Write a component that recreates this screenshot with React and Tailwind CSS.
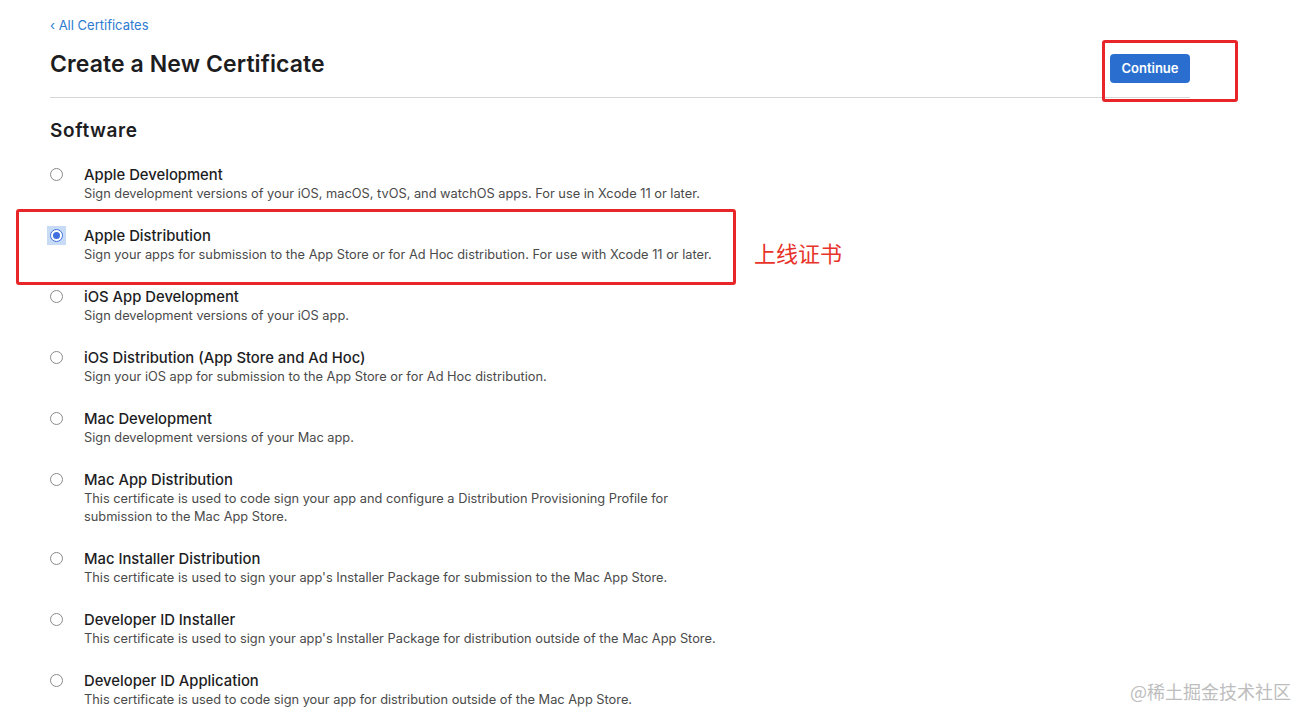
import React from "react";

const rows = [
  { t: "Apple Development", d: ["Sign development versions of your iOS, macOS, tvOS, and watchOS apps. For use in Xcode 11 or later."] },
  { t: "Apple Distribution", d: ["Sign your apps for submission to the App Store or for Ad Hoc distribution. For use with Xcode 11 or later."], sel: true },
  { t: "iOS App Development", d: ["Sign development versions of your iOS app."] },
  { t: "iOS Distribution (App Store and Ad Hoc)", d: ["Sign your iOS app for submission to the App Store or for Ad Hoc distribution."] },
  { t: "Mac Development", d: ["Sign development versions of your Mac app."] },
  { t: "Mac App Distribution", d: ["This certificate is used to code sign your app and configure a Distribution Provisioning Profile for", "submission to the Mac App Store."] },
  { t: "Mac Installer Distribution", d: ["This certificate is used to sign your app's Installer Package for submission to the Mac App Store."] },
  { t: "Developer ID Installer", d: ["This certificate is used to sign your app's Installer Package for distribution outside of the Mac App Store."] },
  { t: "Developer ID Application", d: ["This certificate is used to code sign your app for distribution outside of the Mac App Store."] },
];

function Radio({ sel }) {
  if (sel) {
    return (
      <div className="w-[19px] h-[19px] bg-[#c7dbf6] flex items-center justify-center -ml-[3px] -mt-[3px]">
        <div className="w-[13px] h-[13px] rounded-full border border-[#3f6fe0] bg-white flex items-center justify-center">
          <div className="w-[7px] h-[7px] rounded-full bg-[#3f6fe0]" />
        </div>
      </div>
    );
  }
  return <div className="w-[13px] h-[13px] rounded-full border border-[#8a8a8a] bg-white" />;
}

export default function App() {
  return (
    <div
      className="relative w-[1311px] h-[725px] overflow-hidden bg-white text-[#1d1d1f]"
      style={{ fontFamily: "Inter, 'Noto Sans', 'Noto Sans CJK SC', sans-serif" }}
    >
      <div className="pl-[50px] w-[1190px] pt-[16px]">
        <div className="text-[13px] leading-[18px] text-[#2d7bd0]">‹ All Certificates</div>
        <div className="flex items-start justify-between mt-[16px]">
          <h1 className="text-[23px] leading-[28px] font-semibold tracking-[0.1px] text-[#1d1d1f]">Create a New Certificate</h1>
          <button className="w-[80px] h-[29px] mt-[4px] rounded-[4px] bg-[#2a6fd0] text-white text-[13px] font-semibold">Continue</button>
        </div>
        <div className="mt-[14px] h-px bg-[#d6d6d6]" />
        <h2 className="mt-[21px] text-[19px] leading-[24px] font-semibold tracking-[0.6px]">Software</h2>
        <div className="mt-[22px]">
          {rows.map((r) => (
            <div key={r.t} className="flex mb-[23px]">
              <div className="w-[34px] pt-[3px] flex">
                <Radio sel={r.sel} />
              </div>
              <div>
                <div className="text-[14.8px] leading-[20px] font-medium text-[#1d1d1f]">{r.t}</div>
                {r.d.map((l, i) => (
                  <div key={i} className="text-[12.8px] leading-[18px] text-[#4a4a4a]">{l}</div>
                ))}
              </div>
            </div>
          ))}
        </div>
      </div>

      <div className="absolute left-[1102px] top-[40px] w-[136px] h-[62px] border-[3px] border-[#e8262a] rounded-[3px]" />
      <div className="absolute left-[16px] top-[209px] w-[720px] h-[76px] border-[3px] border-[#e8262a] rounded-[3px]" />
      <div
        className="absolute left-[754px] top-[238px] text-[22px] leading-[28px] text-[#e8332a]"
        style={{ fontFamily: "'Noto Sans CJK SC', sans-serif" }}
      >
        上线证书
      </div>
      <div
        className="absolute left-[1130px] top-[679px] text-[18px] leading-[24px] text-[#bdbdbd]"
        style={{ fontFamily: "'Noto Sans CJK SC', sans-serif" }}
      >
        @稀土掘金技术社区
      </div>
    </div>
  );
}
